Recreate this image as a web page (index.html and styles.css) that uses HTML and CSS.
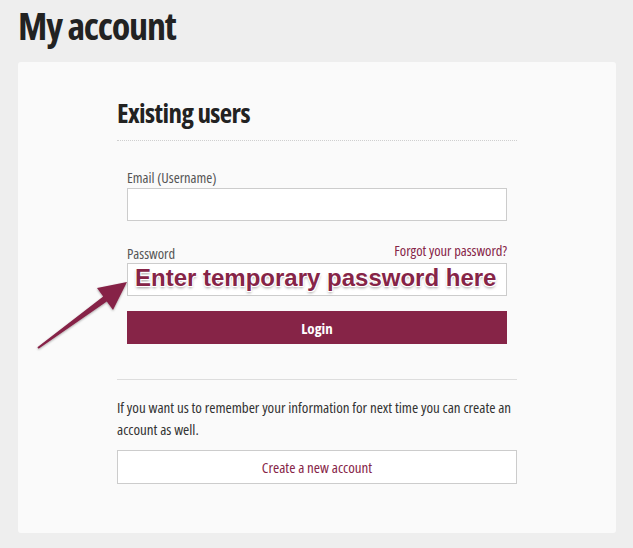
FILE: index.html
```html
<!DOCTYPE html>
<html>
<head>
<meta charset="utf-8">
<link rel="stylesheet" href="styles.css">
</head>
<body>
<h1 class="page-title">My account</h1>
<div class="card">
  <div class="inner">
    <h2 class="section-title">Existing users</h2>
    <div class="form">
      <label class="label">Email (Username)</label>
      <div class="input"></div>
      <div class="pw-row">
        <label class="label">Password</label>
        <a class="forgot">Forgot your password?</a>
      </div>
      <div class="input pw-input">
        <span class="annot">Enter temporary password here</span>
      </div>
      <button class="login">Login</button>
    </div>
    <hr class="sep">
    <p class="info">If you want us to remember your information for next time you can create an account as well.</p>
    <button class="create">Create a new account</button>
  </div>
</div>
<svg class="arrow" width="140" height="80" viewBox="30 280 140 80">
  <defs>
    <filter id="sh" x="-20%" y="-20%" width="140%" height="140%">
      <feDropShadow dx="0" dy="1" stdDeviation="1" flood-color="#000" flood-opacity="0.35"/>
    </filter>
  </defs>
  <polygon filter="url(#sh)" fill="#862447" points="37.4,347.2 103.2,296.6 97,288 127,282 113,310 106.8,301.4 38.6,348.8"/>
</svg>
</body>
</html>
```
FILE: styles.css
```css
html, body { margin: 0; padding: 0; }
body {
  background: #eeeeee;
  font-family: "Open Sans", sans-serif;
  font-stretch: 75%;
  width: 633px;
  height: 548px;
  overflow: hidden;
  position: relative;
}
.page-title {
  margin: 0;
  padding: 2px 0 0 18px;
  height: 58px;
  box-sizing: border-box;
  font-size: 38px;
  font-weight: bold;
  color: #222;
  letter-spacing: -1.2px;
  line-height: 46px;
}
.card {
  margin: 4px 17px 0 18px;
  background: #fafafa;
  border-radius: 3px;
  height: 471px;
  box-sizing: border-box;
  padding-top: 33px;
}
.inner { width: 400px; margin: 0 auto; }
.section-title {
  margin: 0;
  font-size: 27px;
  font-weight: bold;
  color: #222;
  letter-spacing: -0.6px;
  line-height: 36px;
  height: 45px;
  border-bottom: 1px dotted #cfcfcf;
}
.form { padding: 28px 10px 0 10px; }
.label {
  display: block;
  font-size: 14.5px;
  font-weight: 500;
  color: #555;
  line-height: 18px;
  height: 19px;
}
.input {
  height: 33px;
  box-sizing: border-box;
  background: #fff;
  border: 1px solid #ccc;
}
.pw-row {
  display: flex;
  justify-content: space-between;
  align-items: flex-end;
  margin-top: 22px;
  height: 20px;
}
.pw-row .label { height: auto; }
.forgot {
  font-size: 14.5px;
  font-weight: 500;
  color: #862447;
  line-height: 18px;
  margin-bottom: 3px;
}
.pw-input { position: relative; }
.annot {
  position: absolute;
  left: 7px;
  top: 0px;
  font-family: "Liberation Sans", Arial, sans-serif;
  font-stretch: 100%;
  font-weight: bold;
  font-size: 24px;
  line-height: 28px;
  color: #862447;
  white-space: nowrap;
  text-shadow: -1px -1px 0 #fff, 1px -1px 0 #fff, -1px 1px 0 #fff, 1px 1px 0 #fff, 0 2px 3px rgba(0,0,0,0.4);
}
.login {
  display: block;
  width: 100%;
  margin-top: 15px;
  height: 33px;
  border: 0;
  background: #862447;
  color: #fff;
  font-family: inherit;
  font-stretch: 75%;
  font-size: 15px;
  font-weight: bold;
}
.sep {
  margin: 35px 0 0 0;
  border: 0;
  border-top: 1px solid #dddddd;
  height: 0;
}
.info {
  margin: 16px 0 0 0;
  font-size: 15px;
  font-weight: 500;
  line-height: 22px;
  color: #333;
}
.create {
  display: block;
  width: 100%;
  margin-top: 10px;
  height: 34px;
  background: #fff;
  border: 1px solid #ccc;
  color: #862447;
  font-family: inherit;
  font-stretch: 75%;
  font-size: 15px;
  font-weight: 500;
}
.arrow {
  position: absolute;
  left: 30px;
  top: 280px;
}
```
